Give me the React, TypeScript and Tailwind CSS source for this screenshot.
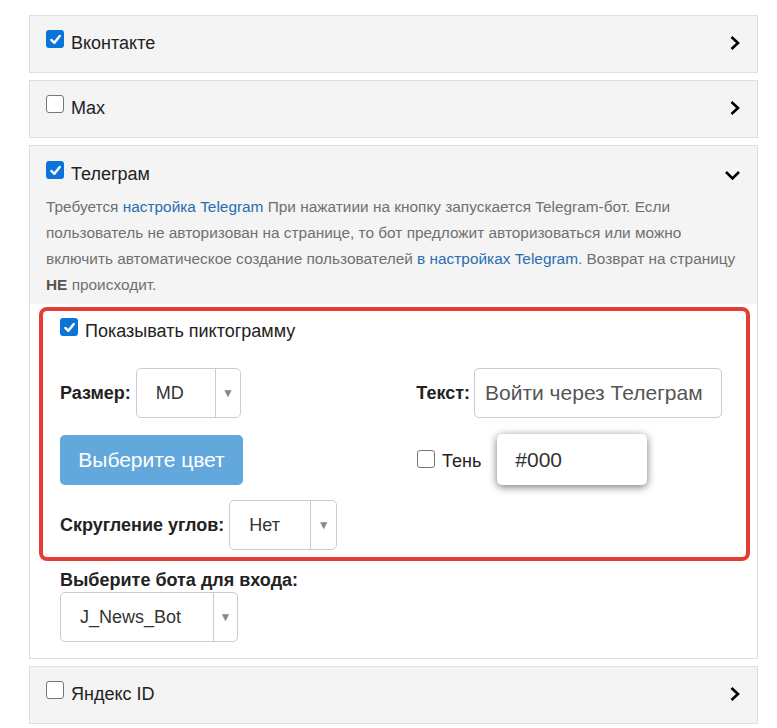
import React from "react";

const Check = ({ checked }: { checked: boolean }) =>
  checked ? (
    <span className="flex h-[18px] w-[18px] shrink-0 items-center justify-center rounded-[3px] bg-[#0b74d6]">
      <svg width="13" height="13" viewBox="0 0 14 14">
        <path d="M2.5 7.5 L5.8 10.6 L11.6 3.2" fill="none" stroke="#fff" strokeWidth="2.6" strokeLinecap="round" strokeLinejoin="round" />
      </svg>
    </span>
  ) : (
    <span className="block h-[18px] w-[18px] shrink-0 rounded-[3px] border border-[#767676] bg-white" />
  );

const ChevronRight = () => (
  <svg width="12" height="16" viewBox="0 0 12 16" className="shrink-0">
    <path d="M2.5 2 L9 8 L2.5 14" fill="none" stroke="#000" strokeWidth="2.6" />
  </svg>
);

const ChevronDown = () => (
  <svg width="17" height="11" viewBox="0 0 17 11" className="shrink-0">
    <path d="M2 2 L8.5 8.5 L15 2" fill="none" stroke="#000" strokeWidth="2.6" />
  </svg>
);

const Select = ({ value, width, split }: { value: string; width: string; split: string }) => (
  <div className={`flex h-[50px] shrink-0 rounded-[5px] border border-[#ccc] bg-white ${width}`}>
    <div className={`flex items-center pl-[19px] text-[18px] text-[#333] ${split}`}>{value}</div>
    <div className="flex flex-1 items-center justify-center border-l border-[#ccc] text-[12px] text-[#888]">▼</div>
  </div>
);

const Collapsed = ({ title, checked }: { title: string; checked: boolean }) => (
  <div className="flex h-[58px] items-start justify-between border border-[#dedede] bg-[#f4f4f4] px-4 pt-[13px]">
    <label className="flex items-start gap-[7px] text-[18px] leading-[28px] text-[#222]">
      <span className="pt-[1px]">
        <Check checked={checked} />
      </span>
      {title}
    </label>
    <span className="pt-[6px]">
      <ChevronRight />
    </span>
  </div>
);

export default function App() {
  return (
    <div className="flex flex-col gap-[7px] bg-white pl-[29px] pr-[19px] pt-[15px] font-['Liberation_Sans',Arial,sans-serif]">
      <Collapsed title="Вконтакте" checked />
      <Collapsed title="Max" checked={false} />

      <div className="border border-[#dedede]">
        <div className="bg-[#f4f4f4] pb-[6px] pl-4 pr-[4px] pt-[14px]">
          <div className="flex items-start justify-between pr-[12px]">
            <label className="flex items-start gap-[7px] text-[18px] leading-[28px] text-[#222]">
              <span className="pt-[1px]">
                <Check checked />
              </span>
              Телеграм
            </label>
            <span className="pt-[10px]">
              <ChevronDown />
            </span>
          </div>
          <p className="mt-[6px] whitespace-nowrap text-[15.4px] leading-[26px] text-[#707070]">
            Требуется <a className="text-[#2a6db0]">настройка Telegram</a> При нажатиии на кнопку запускается Telegram-бот. Если
            <br />
            пользователь не авторизован на странице, то бот предложит авторизоваться или можно
            <br />
            включить автоматическое создание пользователей <a className="text-[#2a6db0]">в настройках Telegram</a>. Возврат на страницу
            <br />
            <b className="text-[#555]">НЕ</b> происходит.
          </p>
        </div>

        <div className="bg-white pb-[16px] pl-[9px] pr-[7px] pt-[3px]">
          <div className="flex flex-col gap-[15px] rounded-[8px] border-4 border-[#e53d32] pb-[7px] pl-[17px] pr-[24px] pt-[6px]">
            <label className="mb-[8px] flex items-start gap-[7px] text-[18px] leading-[28px] text-[#222]">
              <span className="pt-[1px]">
                <Check checked />
              </span>
              Показывать пиктограмму
            </label>

            <div className="flex items-center">
              <div className="flex w-[357px] items-center gap-[5px]">
                <span className="text-[18px] font-bold text-[#222]">Размер:</span>
                <Select value="MD" width="w-[105px]" split="w-[78px]" />
              </div>
              <div className="flex items-center gap-[4px]">
                <span className="text-[18px] font-bold text-[#222]">Текст:</span>
                <div className="flex h-[50px] w-[248px] items-center rounded-[5px] border border-[#ccc] bg-white px-[10px] text-[21px] text-[#555]">
                  Войти через Телеграм
                </div>
              </div>
            </div>

            <div className="mt-[1px] flex items-center">
              <div className="w-[357px]">
                <button className="h-[50px] w-[183px] rounded-[5px] bg-[#63a8dc] text-[21px] text-white">Выберите цвет</button>
              </div>
              <div className="flex items-center">
                <label className="flex items-center gap-[7px] pt-[4px] text-[18px] text-[#222]">
                  <span className="-mt-[5px]">
                    <Check checked={false} />
                  </span>
                  Тень
                </label>
                <div className="ml-[16px] flex h-[51px] w-[150px] items-center rounded-[5px] bg-white px-[18px] text-[21px] text-[#333] shadow-[0_2px_9px_rgba(0,0,0,0.55)]">
                  #000
                </div>
              </div>
            </div>

            <div className="flex items-center gap-[5px]">
              <span className="text-[18px] font-bold text-[#222]">Скругление углов:</span>
              <Select value="Нет" width="w-[108px]" split="w-[80px]" />
            </div>
          </div>

          <div className="pl-[21px] pt-[8px]">
            <div className="text-[18px] font-bold leading-[22px] text-[#222]">Выберите бота для входа:</div>
            <div className="mt-[1px]">
              <Select value="J_News_Bot" width="w-[178px]" split="w-[152px]" />
            </div>
          </div>
        </div>
      </div>

      <Collapsed title="Яндекс ID" checked={false} />
    </div>
  );
}
